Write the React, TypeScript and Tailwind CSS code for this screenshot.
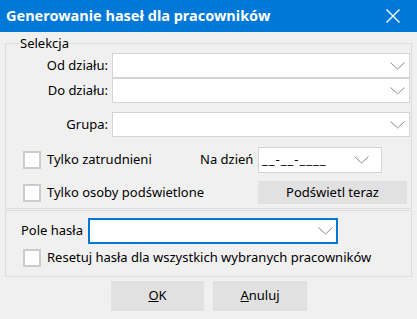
import React from 'react'

const font = { fontFamily: '"Noto Sans", "Open Sans", sans-serif' }

function Chevron({ className }: { className?: string }) {
  return (
    <svg width="15" height="8" viewBox="0 0 15 8" className={className}>
      <path d="M0.5 0.5 L7.5 7 L14.5 0.5" fill="none" stroke="#8a8a8a" strokeWidth="1" />
    </svg>
  )
}

function Combo({ className }: { className?: string }) {
  return (
    <div className={`flex items-center justify-end bg-white border border-[#d4d4d4] ${className ?? ''}`}>
      <Chevron className="mr-[4px]" />
    </div>
  )
}

function Check({ label }: { label: string }) {
  return (
    <div className="flex items-center">
      <div className="w-[18px] h-[18px] border-2 border-[#cccccc] bg-white ml-[17px]" />
      <span className="ml-[6px] text-[13px] text-black">{label}</span>
    </div>
  )
}

function LabeledCombo({ label, className }: { label: string; className?: string }) {
  return (
    <div className={`flex items-center ${className ?? ''}`}>
      <span className="w-[102px] text-right text-[13px] text-black">{label}</span>
      <Combo className="ml-[4px] flex-1 h-[25px] mr-[1px]" />
    </div>
  )
}

export default function App() {
  return (
    <div className="w-[417px] h-[319px] bg-[#f0f0f0] overflow-hidden" style={font}>
      {/* pasek tytułu */}
      <div className="h-[32px] bg-[#0078d7] flex items-center justify-between pl-[6px] pr-[17px]">
        <span className="text-[14.5px] font-bold text-white">Generowanie haseł dla pracowników</span>
        <svg width="14" height="14" viewBox="0 0 14 14">
          <path d="M0.5 0.5 L13.5 13.5 M13.5 0.5 L0.5 13.5" stroke="white" strokeWidth="1.3" />
        </svg>
      </div>

      <div className="pl-[5px] pr-[5px]">
        {/* Selekcja */}
        <fieldset className="mt-[3px] border border-[#dcdcdc] pb-[4px]">
          <legend className="ml-[13px] px-[1px] text-[13px] leading-[16px] text-black">Selekcja</legend>
          <LabeledCombo label="Od działu:" className="mt-[2px]" />
          <LabeledCombo label="Do działu:" />
          <LabeledCombo label="Grupa:" className="mt-[9px]" />

          <div className="flex items-center mt-[10px] h-[26px]">
            <div className="w-[194px]">
              <Check label="Tylko zatrudnieni" />
            </div>
            <span className="w-[58px] text-[13px] text-black whitespace-nowrap">Na dzień</span>
            <div className="w-[124px] h-[26px] bg-white border border-[#d4d4d4] flex items-center justify-between pl-[3px] pr-[12px]">
              <span className="text-[13px] text-black tracking-[1px]">__-__-____</span>
              <Chevron />
            </div>
          </div>

          <div className="flex items-center mt-[8px] h-[23px]">
            <div className="w-[252px]">
              <Check label="Tylko osoby podświetlone" />
            </div>
            <button type="button" className="w-[149px] h-[23px] bg-[#e1e1e1] text-[13px] text-black">
              Podświetl teraz
            </button>
          </div>
        </fieldset>

        {/* Pole hasła */}
        <div className="mt-[1px] border border-[#dcdcdc] pt-[7px] pb-[8px]">
          <div className="flex items-center">
            <span className="ml-[15px] w-[67px] text-[13px] text-black">Pole hasła</span>
            <div className="w-[250px] h-[26px] bg-white border-2 border-[#0078d7] flex items-center justify-end">
              <Chevron className="mr-[3px]" />
            </div>
          </div>
          <div className="mt-[4px] h-[20px] flex items-center">
            <Check label="Resetuj hasła dla wszystkich wybranych pracowników" />
          </div>
        </div>

        {/* przyciski */}
        <div className="flex mt-[4px] ml-[106px] gap-[9px]">
          <button type="button" className="w-[93px] h-[30px] bg-[#e1e1e1] text-[13px] text-black">
            <span className="underline">O</span>K
          </button>
          <button type="button" className="w-[94px] h-[30px] bg-[#e1e1e1] text-[13px] text-black">
            <span className="underline">A</span>nuluj
          </button>
        </div>
      </div>
    </div>
  )
}
